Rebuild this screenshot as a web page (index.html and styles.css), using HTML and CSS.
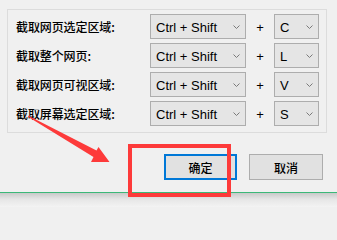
FILE: index.html
```html
<!DOCTYPE html>
<html>
<head>
<meta charset="utf-8">
<link rel="stylesheet" href="styles.css">
</head>
<body>
<div class="dialog">
  <div class="group">
    <div class="row">
      <span class="label">截取网页选定区域:</span>
      <div class="combo wide"><span>Ctrl + Shift</span><svg class="chev" width="7" height="4" viewBox="0 0 7 4"><path d="M0.5 0.5 L3.5 3.5 L6.5 0.5" fill="none" stroke="#7a7a7a" stroke-width="1"/></svg></div>
      <span class="plus">+</span>
      <div class="combo narrow"><span>C</span><svg class="chev" width="7" height="4" viewBox="0 0 7 4"><path d="M0.5 0.5 L3.5 3.5 L6.5 0.5" fill="none" stroke="#7a7a7a" stroke-width="1"/></svg></div>
    </div>
    <div class="row">
      <span class="label">截取整个网页:</span>
      <div class="combo wide"><span>Ctrl + Shift</span><svg class="chev" width="7" height="4" viewBox="0 0 7 4"><path d="M0.5 0.5 L3.5 3.5 L6.5 0.5" fill="none" stroke="#7a7a7a" stroke-width="1"/></svg></div>
      <span class="plus">+</span>
      <div class="combo narrow"><span>L</span><svg class="chev" width="7" height="4" viewBox="0 0 7 4"><path d="M0.5 0.5 L3.5 3.5 L6.5 0.5" fill="none" stroke="#7a7a7a" stroke-width="1"/></svg></div>
    </div>
    <div class="row">
      <span class="label">截取网页可视区域:</span>
      <div class="combo wide"><span>Ctrl + Shift</span><svg class="chev" width="7" height="4" viewBox="0 0 7 4"><path d="M0.5 0.5 L3.5 3.5 L6.5 0.5" fill="none" stroke="#7a7a7a" stroke-width="1"/></svg></div>
      <span class="plus">+</span>
      <div class="combo narrow"><span>V</span><svg class="chev" width="7" height="4" viewBox="0 0 7 4"><path d="M0.5 0.5 L3.5 3.5 L6.5 0.5" fill="none" stroke="#7a7a7a" stroke-width="1"/></svg></div>
    </div>
    <div class="row">
      <span class="label">截取屏幕选定区域:</span>
      <div class="combo wide"><span>Ctrl + Shift</span><svg class="chev" width="7" height="4" viewBox="0 0 7 4"><path d="M0.5 0.5 L3.5 3.5 L6.5 0.5" fill="none" stroke="#7a7a7a" stroke-width="1"/></svg></div>
      <span class="plus">+</span>
      <div class="combo narrow"><span>S</span><svg class="chev" width="7" height="4" viewBox="0 0 7 4"><path d="M0.5 0.5 L3.5 3.5 L6.5 0.5" fill="none" stroke="#7a7a7a" stroke-width="1"/></svg></div>
    </div>
  </div>
  <div class="buttons">
    <button class="btn primary">确定</button>
    <button class="btn">取消</button>
  </div>
</div>
<div class="bottom"></div>
<svg class="annot" width="337" height="207" viewBox="0 0 337 207">
  <rect x="130" y="146" width="99" height="49" fill="none" stroke="#fd3a3a" stroke-width="4"/>
  <polygon points="28,115.5 96.5,150.5 98.5,147 109.5,162 91,162 93.5,157 28,116.8" fill="#fd3a3a"/>
</svg>
</body>
</html>
```
FILE: styles.css
```css
html, body {
  margin: 0;
  padding: 0;
  background: #f0f0f0;
}
body {
  width: 337px;
  height: 207px;
  font-family: "Noto Sans CJK SC", "Liberation Sans", sans-serif;
  font-size: 12px;
  color: #000;
  position: relative;
  overflow: hidden;
}
.dialog {
  height: 192px;
  display: flex;
  flex-direction: column;
}
.group {
  margin: 9px 10px 0 7px;
  border: 1px solid #dcdcdc;
  padding: 4px 0 6px 8px;
  display: flex;
  flex-direction: column;
  gap: 4px;
}
.row {
  display: grid;
  grid-template-columns: 134px 96px 28px 45px;
  align-items: center;
  height: 25px;
}
.label {
  font-family: "Noto Sans CJK SC", sans-serif;
  font-weight: 500;
  font-size: 12px;
  line-height: 14px;
  white-space: nowrap;
  letter-spacing: -0.1px;
}
.combo {
  box-sizing: border-box;
  height: 25px;
  border: 1px solid #adadad;
  background: #e5e5e5;
  display: flex;
  align-items: center;
  justify-content: space-between;
  padding: 0 5px 0 5px;
  font-family: "Liberation Sans", Arial, sans-serif;
  font-size: 13px;
}
.combo span {
  line-height: 15px;
  padding-top: 1px;
}
.chev {
  display: block;
  margin-top: 1px;
}
.plus {
  text-align: center;
  font-family: "Liberation Sans", Arial, sans-serif;
  font-size: 13px;
  padding-top: 2px;
}
.buttons {
  margin-top: 21px;
  display: flex;
  justify-content: flex-end;
  gap: 12px;
  padding-right: 14px;
}
.btn {
  box-sizing: border-box;
  width: 74px;
  height: 26px;
  border: 1px solid #adadad;
  background: #e1e1e1;
  font-family: "Noto Sans CJK SC", sans-serif;
  font-weight: 500;
  font-size: 12px;
  color: #000;
  padding: 0;
  margin: 0;
}
.btn.primary {
  border: 2px solid #0078d7;
  width: 73px;
}
.bottom {
  height: 14px;
  border-top: 1px solid #3cb878;
  background: linear-gradient(#c9c9c9, #e6e6e6 45%, #f3f3f3);
}
.annot {
  position: absolute;
  left: 0;
  top: 0;
  pointer-events: none;
}
```
